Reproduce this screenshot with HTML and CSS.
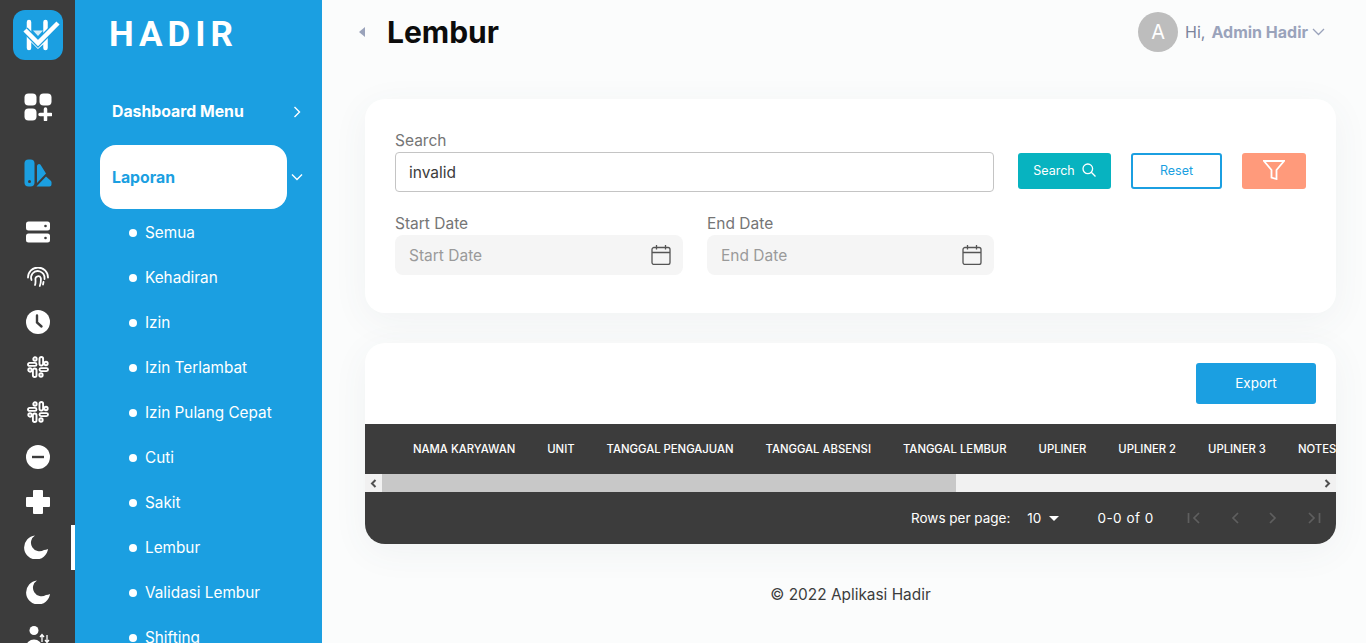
FILE: index.html
```html
<!DOCTYPE html>
<html lang="en">
<head>
    <meta charset="UTF-8">
    <title>Lembur - Hadir</title>
    <link rel="stylesheet" href="styles.css">
</head>
<body>
<div class="app">

    <!-- icon rail -->
    <nav class="rail">
        <div class="rail-logo">
            <svg width="50" height="50" viewBox="0 0 50 50">
                <rect width="50" height="50" rx="12" fill="#1b9fe1"/>
                <path d="M16 12V38M32.500 12V38" stroke="#fff" stroke-width="4.500" stroke-linecap="round" fill="none"/>
                <path d="M16 28L25 37L33 30" stroke="#fff" stroke-width="3" fill="none"/>
                <path d="M12 20L25 33L45 13" stroke="#1b9fe1" stroke-width="7" fill="none"/>
                <path d="M12 20L25 33L45 13" stroke="#fff" stroke-width="4.500" fill="none"/>
                <path d="M20 20.500H30L25 26Z" fill="#fff" opacity=".8"/>
            </svg>
        </div>
        <div class="rail-item rail-apps">
            <svg width="28" height="28" viewBox="0 0 28 28" fill="#fff">
                <rect x="0.500" y="0.500" width="12" height="12" rx="4"/>
                <rect x="15.500" y="0.500" width="12" height="12" rx="4"/>
                <rect x="0.500" y="15.500" width="12" height="12" rx="4"/>
                <path d="M21.500 16v11M16 21.500h11" stroke="#fff" stroke-width="3.500" stroke-linecap="round"/>
            </svg>
        </div>
        <div class="rail-item rail-brand">
            <svg width="28" height="28" viewBox="0 0 28 28" fill="#1b9fe1">
                <rect x="0.500" y="0.500" width="10" height="27" rx="4"/>
                <circle cx="5.500" cy="22.500" r="1.500" fill="#3c3c3c"/>
                <path d="M13 7a2 2 0 0 1 3.400-1.400L22 14.500L13 24Z"/>
                <path d="M12.500 27.500L22 17.500L26.500 21.500a3 3 0 0 1 1 1.500V25.500a2 2 0 0 1-2 2Z"/>
            </svg>
        </div>
        <div class="rail-item">
            <svg width="24" height="22" viewBox="0 0 24 22" fill="#fff">
                <rect y="0.500" width="24" height="9" rx="2.500"/>
                <rect y="12.500" width="24" height="9" rx="2.500"/>
                <circle cx="19.500" cy="5" r="1.300" fill="#3c3c3c"/>
                <circle cx="19.500" cy="17" r="1.300" fill="#3c3c3c"/>
            </svg>
        </div>
        <div class="rail-item">
            <svg width="22" height="20" viewBox="0 0 22 20" fill="none" stroke="#fff" stroke-width="1.800" stroke-linecap="round">
                <path d="M1 10.500a10 10 0 0 1 20 0"/>
                <path d="M4.500 13a6.800 6.800 0 0 1 1-6.500a6.800 6.800 0 0 1 12 4.500v1"/>
                <path d="M8 18c.800-2 .600-4 .400-6a2.800 2.800 0 0 1 5.400-1c.300 3 0 5.500-1 8"/>
                <path d="M16.500 15l-.500 2.500"/>
            </svg>
        </div>
        <div class="rail-item">
            <svg width="24" height="24" viewBox="0 0 24 24">
                <circle cx="12" cy="12" r="12" fill="#fff"/>
                <path d="M11 5.500V12.500L15.500 16.500" stroke="#3c3c3c" stroke-width="2.400" fill="none" stroke-linecap="round"/>
            </svg>
        </div>
        <div class="rail-item">
            <svg class="slack" width="22" height="22" viewBox="0 0 22 22"><use href="#slack-icon"/></svg>
        </div>
        <div class="rail-item">
            <svg class="slack" width="22" height="22" viewBox="0 0 22 22">
                <g id="slack-icon" fill="none" stroke="#fff" stroke-width="1.900">
                    <rect x="12.500" y="1" width="3.600" height="8.500" rx="1.800"/>
                    <rect x="5.900" y="12.500" width="3.600" height="8.500" rx="1.800"/>
                    <rect x="1" y="6.900" width="8.500" height="3" rx="1.500"/>
                    <rect x="12.500" y="12.100" width="8.500" height="3" rx="1.500"/>
                    <circle cx="8" cy="3" r="1.700"/>
                    <circle cx="19" cy="7.500" r="1.700"/>
                    <circle cx="3" cy="14" r="1.700"/>
                    <circle cx="14" cy="19" r="1.700"/>
                </g>
            </svg>
        </div>
        <div class="rail-item">
            <svg width="24" height="24" viewBox="0 0 24 24">
                <circle cx="12" cy="12" r="12" fill="#fff"/>
                <rect x="6" y="10.800" width="12" height="2.400" fill="#3c3c3c"/>
            </svg>
        </div>
        <div class="rail-item">
            <svg width="24" height="24" viewBox="0 0 24 24" fill="#fff">
                <path d="M7 1a1 1 0 0 1 1-1h8a1 1 0 0 1 1 1v6h6a1 1 0 0 1 1 1v8a1 1 0 0 1-1 1h-6v6a1 1 0 0 1-1 1H8a1 1 0 0 1-1-1v-6H1a1 1 0 0 1-1-1V8a1 1 0 0 1 1-1h6z"/>
            </svg>
        </div>
        <div class="rail-item rail-active">
            <svg class="moon-shift" width="24" height="24" viewBox="0 0 24 24" fill="#fff">
                <path d="M11 0.500A12 12 0 1 0 24 14a8.500 8.500 0 0 1-4 1A8 8 0 0 1 11 .5z"/>
            </svg>
        </div>
        <div class="rail-item">
            <svg width="24" height="24" viewBox="0 0 24 24" fill="#fff">
                <path d="M11 0.500A12 12 0 1 0 24 14a8.500 8.500 0 0 1-4 1A8 8 0 0 1 11 .5z"/>
            </svg>
        </div>
        <div class="rail-item rail-last">
            <svg width="26" height="24" viewBox="0 0 26 24" fill="#fff">
                <circle cx="9" cy="4.500" r="4.500"/>
                <path d="M1 21a8 7.500 0 0 1 16 0v3H1z"/>
                <path d="M17 16V9M15 11l2-2.500 2 2.500M22 9v7M20 14l2 2.500 2-2.500" fill="none" stroke="#fff" stroke-width="1.300"/>
            </svg>
        </div>
    </nav>

    <!-- sidebar menu -->
    <aside class="sidebar">
        <div class="brand">HADIR</div>
        <div class="menu-head">
            <span>Dashboard Menu</span>
            <svg width="8" height="12" viewBox="0 0 8 12" fill="none" stroke="#fff" stroke-width="1.400"><path d="M1.500 1L6.500 6L1.500 11"/></svg>
        </div>
        <div class="menu-open">
            <div class="menu-pill">Laporan</div>
            <svg width="12" height="8" viewBox="0 0 12 8" fill="none" stroke="#fff" stroke-width="1.400"><path d="M1 1.500L6 6.500L11 1.500"/></svg>
        </div>
        <ul class="submenu">
            <li>Semua</li>
            <li>Kehadiran</li>
            <li>Izin</li>
            <li>Izin Terlambat</li>
            <li>Izin Pulang Cepat</li>
            <li>Cuti</li>
            <li>Sakit</li>
            <li>Lembur</li>
            <li>Validasi Lembur</li>
            <li>Shifting</li>
        </ul>
    </aside>

    <main class="main">
        <header class="topbar">
            <div class="topbar-left">
                <span class="collapse-arrow"></span>
                <h1>Lembur</h1>
            </div>
            <div class="user">
                <span class="avatar">A</span>
                <span class="hi">Hi,</span>
                <span class="username">Admin Hadir</span>
                <svg width="13" height="8" viewBox="0 0 13 8" fill="none" stroke="#9aa3bb" stroke-width="1.300"><path d="M1 1L6.500 6.500L12 1"/></svg>
            </div>
        </header>

        <section class="card filter-card">
            <div class="filter-row">
                <div class="field field-search">
                    <label>Search</label>
                    <input class="text-input" type="text" value="invalid">
                </div>
                <button class="btn btn-search">Search
                    <svg width="14" height="14" viewBox="0 0 14 14" fill="none" stroke="#fff" stroke-width="1.300"><circle cx="5.800" cy="5.800" r="4.800"/><path d="M9.300 9.300L13.500 13.500"/></svg>
                </button>
                <button class="btn btn-reset">Reset</button>
                <button class="btn btn-filter">
                    <svg width="22" height="20" viewBox="0 0 22 20" fill="none" stroke="#fff" stroke-width="1.800"><path d="M1 1H21L13.500 10V19L8.500 17.500V10Z"/></svg>
                </button>
            </div>
            <div class="date-row">
                <div class="field">
                    <label>Start Date</label>
                    <div class="date-input">
                        <span>Start Date</span>
                        <svg width="20" height="20" viewBox="0 0 20 20" fill="none" stroke="#555" stroke-width="1.300"><rect x="1" y="2.500" width="18" height="17" rx="2"/><path d="M1 7.500H19M5.500 0V4.500M14.500 0V4.500"/></svg>
                    </div>
                </div>
                <div class="field">
                    <label>End Date</label>
                    <div class="date-input">
                        <span>End Date</span>
                        <svg width="20" height="20" viewBox="0 0 20 20" fill="none" stroke="#555" stroke-width="1.300"><rect x="1" y="2.500" width="18" height="17" rx="2"/><path d="M1 7.500H19M5.500 0V4.500M14.500 0V4.500"/></svg>
                    </div>
                </div>
            </div>
        </section>

        <section class="card table-card">
            <div class="table-actions">
                <button class="btn btn-export">Export</button>
            </div>
            <div class="table-head">
                <span>NAMA KARYAWAN</span>
                <span>UNIT</span>
                <span>TANGGAL PENGAJUAN</span>
                <span>TANGGAL ABSENSI</span>
                <span>TANGGAL LEMBUR</span>
                <span>UPLINER</span>
                <span>UPLINER 2</span>
                <span>UPLINER 3</span>
                <span>NOTES</span>
            </div>
            <div class="hscroll">
                <span class="hscroll-btn">
                    <svg width="7" height="9" viewBox="0 0 7 9" fill="none" stroke="#505050" stroke-width="2"><path d="M5.500 1L2 4.500L5.500 8"/></svg>
                </span>
                <span class="hscroll-thumb"></span>
                <span class="hscroll-rest"></span>
                <span class="hscroll-btn">
                    <svg width="7" height="9" viewBox="0 0 7 9" fill="none" stroke="#505050" stroke-width="2"><path d="M1.500 1L5 4.500L1.500 8"/></svg>
                </span>
            </div>
            <div class="table-foot">
                <span class="rows-label">Rows per page:</span>
                <span class="rows-value">10</span>
                <span class="rows-caret"></span>
                <span class="rows-range">0-0 of 0</span>
                <div class="pager">
                    <svg width="14" height="12" viewBox="0 0 14 12" fill="none" stroke="#5f5f5f" stroke-width="1.700"><path d="M1.500 1V11M12 1L7 6L12 11"/></svg>
                    <svg width="8" height="12" viewBox="0 0 8 12" fill="none" stroke="#5f5f5f" stroke-width="1.700"><path d="M7 1L2 6L7 11"/></svg>
                    <svg width="8" height="12" viewBox="0 0 8 12" fill="none" stroke="#5f5f5f" stroke-width="1.700"><path d="M1 1L6 6L1 11"/></svg>
                    <svg width="14" height="12" viewBox="0 0 14 12" fill="none" stroke="#5f5f5f" stroke-width="1.700"><path d="M12.500 1V11M2 1L7 6L2 11"/></svg>
                </div>
            </div>
        </section>

        <footer class="copyright">© 2022 Aplikasi Hadir</footer>
    </main>
</div>
</body>
</html>
```
FILE: styles.css
```css
* {
    box-sizing: border-box;
}

html, body {
    height: 100%;
}

body {
    margin: 0;
    overflow: hidden;
    background-color: #fbfcfc;
    font-family: 'Inter', 'Liberation Sans', sans-serif;
    color: #3c3c3c;
}

.app {
    display: flex;
    height: 643px;
    overflow: hidden;
}

/* icon rail */
.rail {
    flex: 0 0 75px;
    display: flex;
    flex-direction: column;
    align-items: center;
    background-color: #3c3c3c;
    padding-top: 10px;
    overflow: hidden;
}

.rail-logo {
    height: 50px;
    margin-bottom: 24px;
}

.rail-logo svg,
.rail-item svg {
    display: block;
}

.rail-item {
    position: relative;
    flex: 0 0 45px;
    width: 100%;
    display: flex;
    align-items: center;
    justify-content: center;
}

.rail-apps {
    flex-basis: 46px;
    margin-bottom: 20px;
}

.rail-brand {
    flex-basis: 46px;
    margin-bottom: 13px;
}

.rail-active .moon-shift {
    margin-left: -4px;
}

.rail-active::after {
    content: "";
    position: absolute;
    top: 1px;
    right: 0;
    width: 4px;
    height: 45px;
    background-color: #fff;
}

.rail-last {
    align-items: flex-start;
    padding-top: 12px;
}

/* sidebar */
.sidebar {
    flex: 0 0 247px;
    background-color: #1b9fe1;
    color: #fff;
    overflow: hidden;
}

.brand {
    height: 83px;
    padding: 14px 0 0 34px;
    font-family: 'Roboto', sans-serif;
    font-size: 35px;
    line-height: 42px;
    font-weight: 700;
    letter-spacing: 5px;
}

.menu-head {
    display: flex;
    align-items: center;
    justify-content: space-between;
    height: 56px;
    padding: 1px 21px 0 37px;
    font-size: 15.800px;
    font-weight: 700;
}

.menu-open {
    display: flex;
    align-items: center;
    justify-content: space-between;
    margin: 6px 0 0 25px;
    padding-right: 19px;
}

.menu-pill {
    width: 187px;
    height: 64px;
    padding-left: 12px;
    background-color: #fff;
    border-radius: 16px;
    color: #1b9fe1;
    font-size: 15.800px;
    line-height: 66px;
    font-weight: 700;
}

.submenu {
    list-style: none;
    margin: 1px 0 0;
    padding: 0;
}

.submenu li {
    position: relative;
    height: 45px;
    padding-left: 70px;
    font-size: 15.300px;
    line-height: 45px;
}

.submenu li::before {
    content: "";
    position: absolute;
    left: 54px;
    top: 19px;
    width: 8px;
    height: 8px;
    border-radius: 50%;
    background-color: #fff;
}

/* main column */
.main {
    flex: 1;
    min-width: 0;
    padding: 0 30px 0 43px;
}

.topbar {
    display: flex;
    align-items: center;
    justify-content: space-between;
    height: 64px;
    margin-bottom: 35px;
}

.topbar-left {
    display: flex;
    align-items: center;
}

.collapse-arrow {
    width: 0;
    height: 0;
    margin: 0 22px 0 -6px;
    border-style: solid;
    border-width: 5px 6px 5px 0;
    border-color: transparent #9aa3bb transparent transparent;
}

h1 {
    margin: 0;
    font-size: 30px;
    font-weight: 700;
    color: #0c0c0c;
}

.user {
    display: flex;
    align-items: center;
    margin-right: 11px;
    font-size: 16px;
}

.avatar {
    width: 40px;
    height: 40px;
    margin-right: 7px;
    border-radius: 50%;
    background-color: #bdbdbd;
    color: #fff;
    font-size: 20px;
    line-height: 40px;
    text-align: center;
}

.hi {
    margin-right: 6px;
    color: #7c849c;
}

.username {
    margin-right: 4px;
    color: #9aa3bb;
    font-weight: 700;
}

.card {
    background-color: #fff;
    border-radius: 20px;
    box-shadow: 0 8px 36px rgba(70, 90, 110, 0.06);
}

.filter-card {
    height: 214px;
    padding: 32px 30px 0;
}

.filter-row {
    display: flex;
    align-items: flex-end;
}

.field {
    display: flex;
    flex-direction: column;
}

.field label {
    margin-bottom: 1px;
    font-size: 15.500px;
    line-height: 20px;
    color: #757575;
}

.field-search {
    width: 599px;
}

.text-input {
    height: 40px;
    margin: 0;
    padding: 0 13px;
    border: 1px solid #c4c4c4;
    border-radius: 4px;
    font: 15.500px 'Inter', sans-serif;
    color: #3c3c3c;
    outline: none;
}

.btn {
    display: flex;
    align-items: center;
    justify-content: center;
    height: 36px;
    padding: 0 0 2px;
    border: none;
    border-radius: 3px;
    font-family: 'Inter', sans-serif;
    font-size: 12.500px;
    cursor: pointer;
}

.btn-search {
    width: 93px;
    margin: 0 20px 3px 24px;
    gap: 7px;
    background-color: #07b3c0;
    color: #fff;
}

.btn-reset {
    width: 91px;
    margin: 0 20px 3px 0;
    background-color: #fff;
    border: 2px solid #1b9fe1;
    color: #1b9fe1;
}

.btn-filter {
    width: 64px;
    margin-bottom: 3px;
    background-color: #ff9a7b;
}

.date-row {
    display: grid;
    grid-template-columns: 288px 287px;
    gap: 24px;
    margin-top: 22px;
}

.date-input {
    display: flex;
    align-items: center;
    justify-content: space-between;
    height: 40px;
    padding: 0 12px 0 14px;
    background-color: #f5f5f5;
    border-radius: 8px;
    font-size: 15.500px;
    color: #9a9a9a;
}

.table-card {
    height: 201px;
    margin-top: 30px;
    overflow: hidden;
}

.table-actions {
    display: flex;
    justify-content: flex-end;
    height: 81px;
    padding: 20px 20px 0 0;
}

.btn-export {
    width: 120px;
    height: 41px;
    background-color: #1b9fe1;
    color: #fff;
    font-size: 13.500px;
}

.table-head {
    display: flex;
    align-items: center;
    gap: 32px;
    height: 50px;
    padding-left: 48px;
    background-color: #3c3c3c;
    color: #fff;
    font-size: 11.300px;
    font-weight: 500;
    white-space: nowrap;
    overflow: hidden;
}

.hscroll {
    display: flex;
    height: 18px;
    background-color: #f1f1f1;
}

.hscroll-btn {
    flex: 0 0 17px;
    display: flex;
    align-items: center;
    justify-content: center;
}

.hscroll-thumb {
    flex: 0 0 574px;
    background-color: #c8c8c8;
}

.hscroll-rest {
    flex: 1;
}

.table-foot {
    display: flex;
    align-items: center;
    height: 52px;
    padding-left: 546px;
    background-color: #3c3c3c;
    color: #fff;
    font-size: 13.500px;
    white-space: nowrap;
}

.rows-value {
    margin-left: 17px;
}

.rows-caret {
    width: 0;
    height: 0;
    margin: 0 38px 0 8px;
    border-style: solid;
    border-width: 5px 5px 0;
    border-color: #fff transparent transparent;
}

.rows-range {
    letter-spacing: 0.500px;
}

.pager {
    display: flex;
    align-items: center;
    gap: 30px;
    margin-left: 33px;
}

.copyright {
    margin-top: 41px;
    text-align: center;
    font-size: 15.400px;
    line-height: 20px;
    color: #3c3c3c;
}
```
